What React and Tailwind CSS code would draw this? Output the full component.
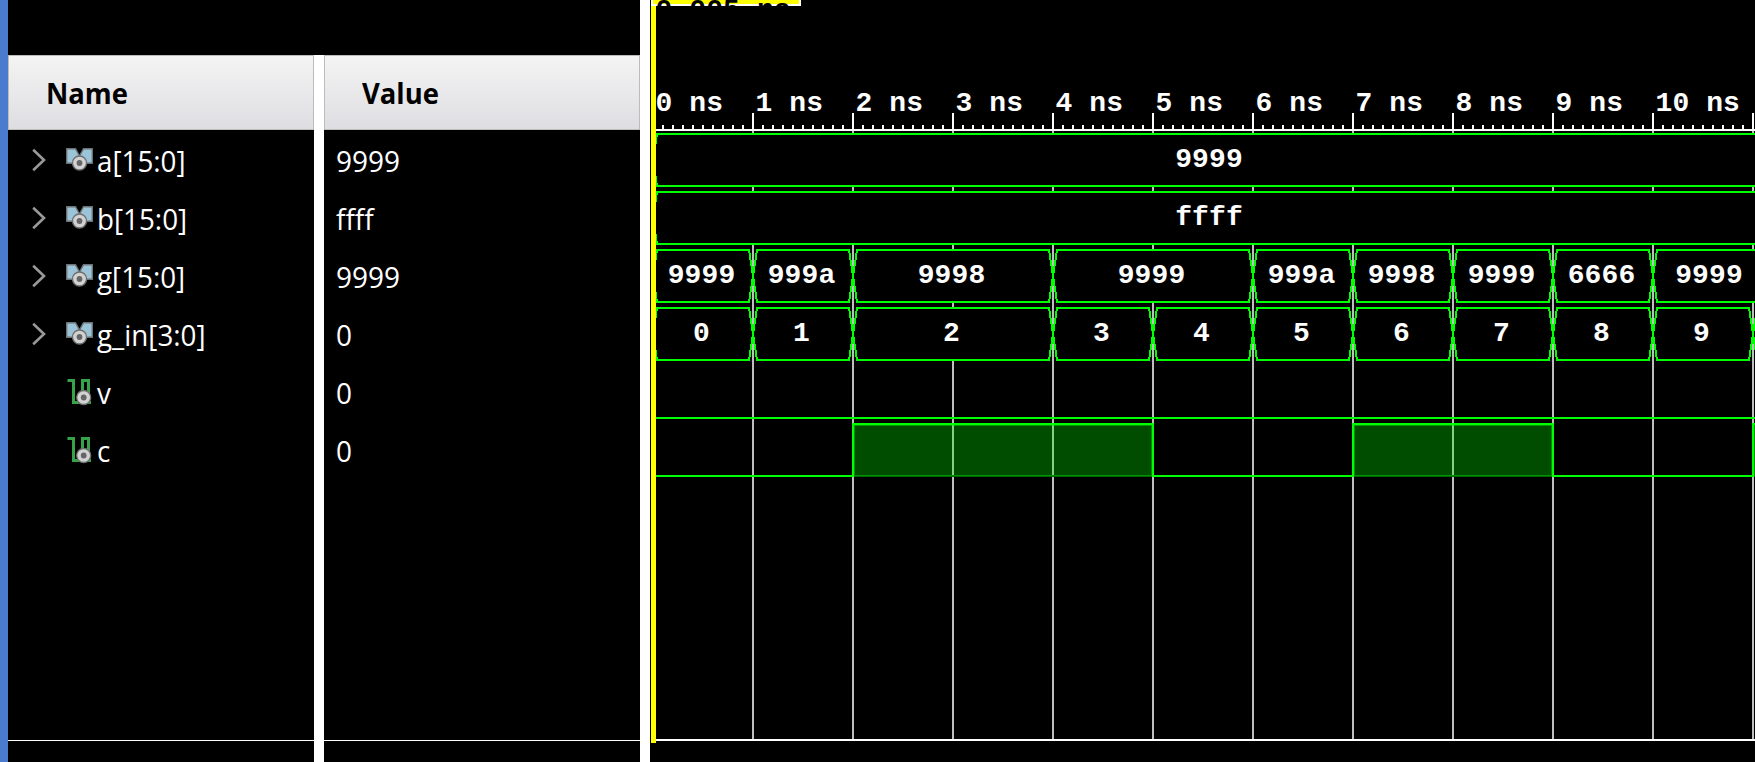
import React from "react";

const SIGNALS = [
  { name: "a[15:0]", value: "9999", bus: true },
  { name: "b[15:0]", value: "ffff", bus: true },
  { name: "g[15:0]", value: "9999", bus: true },
  { name: "g_in[3:0]", value: "0", bus: true },
  { name: "v", value: "0", bus: false },
  { name: "c", value: "0", bus: false },
];

// Pixel position of a time in ns, relative to the wave panel
const X0 = 3;
const px = (ns) => X0 + ns * 100;
const END = 1105;

const BUSES = [
  { top: 134, segs: [[0, 12, "9999", 559]] },
  { top: 192, segs: [[0, 12, "ffff", 559]] },
  {
    top: 250,
    segs: [
      [0, 1, "9999"], [1, 2, "999a"], [2, 4, "9998"], [4, 6, "9999"], [6, 7, "999a"],
      [7, 8, "9998"], [8, 9, "9999"], [9, 10, "6666"], [10, 12, "9999", 1059],
    ],
  },
  {
    top: 308,
    segs: [
      [0, 1, "0"], [1, 2, "1"], [2, 4, "2"], [4, 5, "3"], [5, 6, "4"], [6, 7, "5"],
      [7, 8, "6"], [8, 9, "7"], [9, 10, "8"], [10, 11, "9"], [11, 12, ""],
    ],
  },
];

const HIGHS = [[2, 5], [7, 9], [11, 12]];

function Chevron() {
  return (
    <svg className="-mt-[2px] h-6 w-[14px] shrink-0" viewBox="0 0 14 24" fill="none">
      <path d="M1.2 1.8 L12 12 L1.2 22.2" stroke="#999" strokeWidth="2.6" />
    </svg>
  );
}

function Knob({ cx, cy }) {
  return (
    <g>
      <circle cx={cx} cy={cy} r="7" fill="#d2d2d2" stroke="#6e6e6e" strokeWidth="1.3" />
      <circle cx={cx} cy={cy} r="2.9" fill="#666" />
    </g>
  );
}

function BusIcon() {
  return (
    <svg className="-ml-px h-7 w-[31px] shrink-0" viewBox="0 0 31 28">
      <path d="M1.7 1.7 H10.5 L14.5 9 L18.5 1.7 H27.3 V16.3 H1.7 Z" fill="#9bc4d8" stroke="#6b7175" strokeWidth="1.4" />
      <Knob cx={14.5} cy={16} />
    </svg>
  );
}

function BitIcon() {
  return (
    <svg className="-ml-px h-7 w-[31px] shrink-0" viewBox="0 0 31 28">
      <path d="M2.5 0.5 H8.5 V22.5 H17.5 V0.5 H23.5 V22.5 H26" transform="translate(0 1)" fill="none" stroke="#36a349" strokeWidth="3" />
      <Knob cx={18.7} cy={18.5} />
    </svg>
  );
}

function ColumnHeader({ children }) {
  return (
    <div className="flex h-[75px] items-center border border-[#bcbcbc] bg-gradient-to-b from-[#f4f4f4] to-[#dedee2] pl-[37px] text-[29px] font-bold text-black">
      <span className="origin-left scale-x-[0.945]">{children}</span>
    </div>
  );
}

function NameColumn() {
  return (
    <div className="flex w-[306px] flex-col bg-black">
      <ColumnHeader>Name</ColumnHeader>
      <div className="flex h-[611px] flex-col border-b border-white pt-[2px]">
        {SIGNALS.map((s) => (
          <div key={s.name} className="flex h-[58px] items-center pl-6">
            <div className="flex w-[34px]">{s.bus && <Chevron />}</div>
            {s.bus ? <BusIcon /> : <BitIcon />}
            <span className="origin-left scale-x-[0.975] pl-px text-[28.5px]">{s.name}</span>
          </div>
        ))}
      </div>
    </div>
  );
}

function ValueColumn() {
  return (
    <div className="flex w-[316px] flex-col bg-black">
      <ColumnHeader>Value</ColumnHeader>
      <div className="flex h-[611px] flex-col border-b border-white pt-[2px]">
        {SIGNALS.map((s) => (
          <div key={s.name} className="flex h-[58px] items-center pl-3">
            <span className="origin-left scale-x-[0.98] text-[28.5px] [font-variant-ligatures:none]">{s.value}</span>
          </div>
        ))}
      </div>
    </div>
  );
}

function BusSegment({ top, from, to, label, labelX }) {
  const l = px(from);
  const r = px(to);
  const mid = top + 26;
  const bot = top + 52;
  const d = `M${l} ${mid} L${l + 4} ${top} H${r - 4} L${r} ${mid} L${r - 4} ${bot} H${l + 4} Z`;
  return (
    <g>
      <path d={d} fill="#000" stroke="#00ff00" strokeWidth="2" shapeRendering="crispEdges" />
      <text x={labelX ?? (l + r) / 2 - 1.5} y={mid + 7} textAnchor="middle">{label}</text>
    </g>
  );
}

function WavePanel() {
  const major = Array.from({ length: 11 }, (_, i) => i + 1);
  const minor = Array.from({ length: 111 }, (_, i) => i).filter((i) => i % 10 !== 0);
  return (
    <svg
      className="h-[762px] w-[1105px] shrink-0 bg-black font-['Liberation_Mono','Courier_New',monospace] text-[28px] font-bold tracking-[0.1px]"
      viewBox={`0 0 ${END} 762`}
      fill="#fff"
    >
      <g shapeRendering="crispEdges">
        {major.map((n) => (
          <g key={n}>
            <rect x={px(n) - 1} y="131" width="2" height="608" fill="#bebebe" />
            <rect x={px(n) - 1} y="113" width="2" height="16" />
          </g>
        ))}
        {minor.map((i) => (
          <rect key={i} x={2 + i * 10} y="125" width="2" height="4" />
        ))}
        <rect x="6" y="129" width="1099" height="2" />
        <rect x="6" y="739" width="1099" height="2" />
      </g>

      {Array.from({ length: 11 }, (_, n) => (
        <text key={n} x={px(n) + 2.5} y="111">{`${n} ns`}</text>
      ))}

      {BUSES.map((b) =>
        b.segs.map(([from, to, label, labelX]) => (
          <BusSegment key={`${b.top}-${from}`} top={b.top} from={from} to={to} label={label} labelX={labelX} />
        ))
      )}

      <g shapeRendering="crispEdges">
        <rect x="6" y="417" width="1099" height="2" fill="#0f0" />
        <path d="M6 476 H203 V424 H503 V476 H703 V424 H903 V476 H1103 V424 H1105" fill="none" stroke="#0f0" strokeWidth="2" />
        {HIGHS.map(([from, to]) => (
          <g key={from}>
            <rect x={px(from) + 1} y="475" width={px(to) - px(from) - 2} height="2" fill="#000" />
            <rect x={px(from) + 1} y="425" width={px(to) - px(from) - 2} height="52" fill="#0f0" fillOpacity="0.3" />
            <rect x={px(from) + 1.5} y="425.5" width={px(to) - px(from) - 3} height="50" fill="none" stroke="#0f0" strokeOpacity="0.4" />
            <rect x={px(from) + 1} y="476" width={px(to) - px(from) - 2} height="1" fill="#0f0" fillOpacity="0.15" />
          </g>
        ))}
      </g>

      <g shapeRendering="crispEdges">
        <rect x="1" y="0" width="150" height="6" />
        <rect x="3" y="0" width="146" height="4" fill="#ff0" />
        <rect x="1" y="6" width="5" height="737" fill="#ff0" />
      </g>
      <text x="5.5" y="18" fill="#000">0.005 ns</text>
    </svg>
  );
}

export default function App() {
  return (
    <div className="flex h-[762px] w-[1755px] overflow-hidden bg-black font-['Open_Sans','Noto_Sans',sans-serif] text-white">
      <div className="w-2 shrink-0 bg-[#4a7bcf]" />
      <div className="w-[632px] shrink-0 pt-[55px]">
        <div className="flex h-[707px] gap-[10px] bg-white">
          <NameColumn />
          <ValueColumn />
        </div>
      </div>
      <div className="w-[10px] shrink-0 bg-white" />
      <WavePanel />
    </div>
  );
}
